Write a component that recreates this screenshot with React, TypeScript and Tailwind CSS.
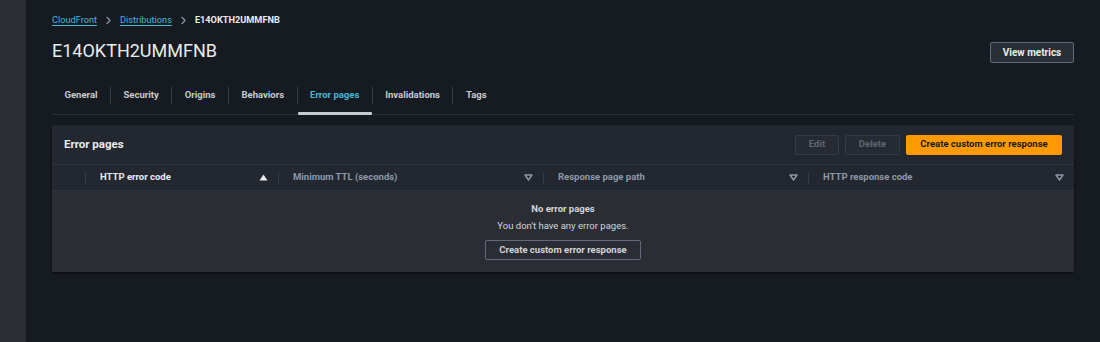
import { ChevronRight } from "lucide-react";

const tabs = ["General", "Security", "Origins", "Behaviors", "Error pages", "Invalidations", "Tags"];

function SortIcon({ active }: { active?: boolean }) {
  if (active) {
    return (
      <svg width="9" height="7" viewBox="0 0 9 7">
        <path d="M4.5 0.5 L8.5 6.5 L0.5 6.5 Z" fill="#e9ebed" />
      </svg>
    );
  }
  return (
    <svg width="9" height="7" viewBox="0 0 9 7">
      <path d="M1 1 L8 1 L4.5 6 Z" fill="none" stroke="#8d99a8" strokeWidth="1.4" strokeLinejoin="round" />
    </svg>
  );
}

const cols = [
  { label: "HTTP error code", active: true },
  { label: "Minimum TTL (seconds)" },
  { label: "Response page path" },
  { label: "HTTP response code" },
];

export default function App() {
  return (
    <div
      className="flex h-[342px] w-[1100px] bg-[#161a21] text-[#d1d5db]"
      style={{ fontFamily: "Roboto, 'Open Sans', sans-serif" }}
    >
      <aside className="w-[26px] shrink-0 bg-[#2a2d33]" />
      <main className="flex-1 pl-[26px] pr-[26px]">
        {/* breadcrumb */}
        <nav className="flex items-center pt-[13px] text-[9.2px] leading-[14px]">
          <a className="text-[#44b9d6] underline underline-offset-2">CloudFront</a>
          <ChevronRight size={13} className="mx-[5px] text-[#8d99a8]" />
          <a className="text-[#44b9d6] underline underline-offset-2">Distributions</a>
          <ChevronRight size={13} className="mx-[5px] text-[#8d99a8]" />
          <span className="font-bold text-[#e9ebed]">E14OKTH2UMMFNB</span>
        </nav>

        {/* title row */}
        <div className="mt-[11px] flex items-center justify-between">
          <h1 className="text-[18px] leading-[26px] text-[#e9ebed]">E14OKTH2UMMFNB</h1>
          <button className="mt-[2px] h-[21px] w-[84px] rounded-[2px] border border-[#5f6b7a] bg-[#2a2e35] text-[10px] font-bold text-[#e9ebed]">
            View metrics
          </button>
        </div>

        {/* tabs */}
        <div className="mt-[13px] flex border-b border-[#2a2f38]">
          {tabs.map((t, i) => (
            <div key={t} className="flex items-center">
              <div
                className={
                  "relative flex h-[37px] items-center px-[12.5px] text-[9.5px] font-bold " +
                  (t === "Error pages" ? "text-[#44b9d6]" : "text-[#c6cbd1]")
                }
              >
                {t}
                {t === "Error pages" && (
                  <span className="absolute bottom-[-1px] left-0 right-0 h-[3px] rounded-[1px] bg-[#c6cbd1]" />
                )}
              </div>
              {i < tabs.length - 1 && <span className="h-[17px] w-px bg-[#3a3f47]" />}
            </div>
          ))}
        </div>

        {/* panel */}
        <section className="mt-[10px] rounded-[2px] bg-[#232730] shadow-[0_1px_2px_rgba(0,0,0,0.6)]">
          <header className="flex h-[40px] items-center justify-between border-b border-[#2f343d] pl-[12px] pr-[12px]">
            <h2 className="text-[11.5px] font-bold text-[#e9ebed]">Error pages</h2>
            <div className="flex gap-[6px]">
              <button className="h-[20px] w-[44px] rounded-[2px] border border-[#353a43] bg-[#262a33] text-[9.5px] font-bold text-[#5f6671]">
                Edit
              </button>
              <button className="h-[20px] w-[55px] rounded-[2px] border border-[#353a43] bg-[#262a33] text-[9.5px] font-bold text-[#5f6671]">
                Delete
              </button>
              <button className="h-[20px] w-[156px] rounded-[2px] bg-[#ff9900] text-[9.5px] font-bold text-[#16191f]">
                Create custom error response
              </button>
            </div>
          </header>

          {/* table header */}
          <div className="flex h-[26px] items-center border-b border-[#2f343d] text-[9.5px]">
            <div className="flex h-full w-[34px] items-center justify-end">
              <span className="h-[12px] w-px bg-[#353a43]" />
            </div>
            {cols.map((c, i) => (
              <div
                key={c.label}
                className={
                  "flex h-full items-center " +
                  (i === 0 ? "w-[193px]" : i === 3 ? "flex-1" : "w-[265px]")
                }
              >
                <div className="flex flex-1 items-center justify-between pl-[14px] pr-[10px]">
                  <span className={c.active ? "font-bold text-[#e9ebed]" : "font-bold text-[#8d99a8]"}>
                    {c.label}
                  </span>
                  <SortIcon active={c.active} />
                </div>
                {i < 3 && <span className="h-[12px] w-px bg-[#353a43]" />}
              </div>
            ))}
          </div>

          {/* empty body */}
          <div className="flex flex-col items-center bg-[#2a2d33] pb-[12px] pt-[11px] text-[9.5px] leading-[14px]">
            <p className="font-bold text-[#d1d5db]">No error pages</p>
            <p className="mt-[3px] text-[#d1d5db]">You don't have any error pages.</p>
            <button className="mt-[7px] h-[20px] w-[156px] rounded-[2px] border border-[#5f6b7a] text-[9.5px] font-bold text-[#d1d5db]">
              Create custom error response
            </button>
          </div>
        </section>
      </main>
    </div>
  );
}
